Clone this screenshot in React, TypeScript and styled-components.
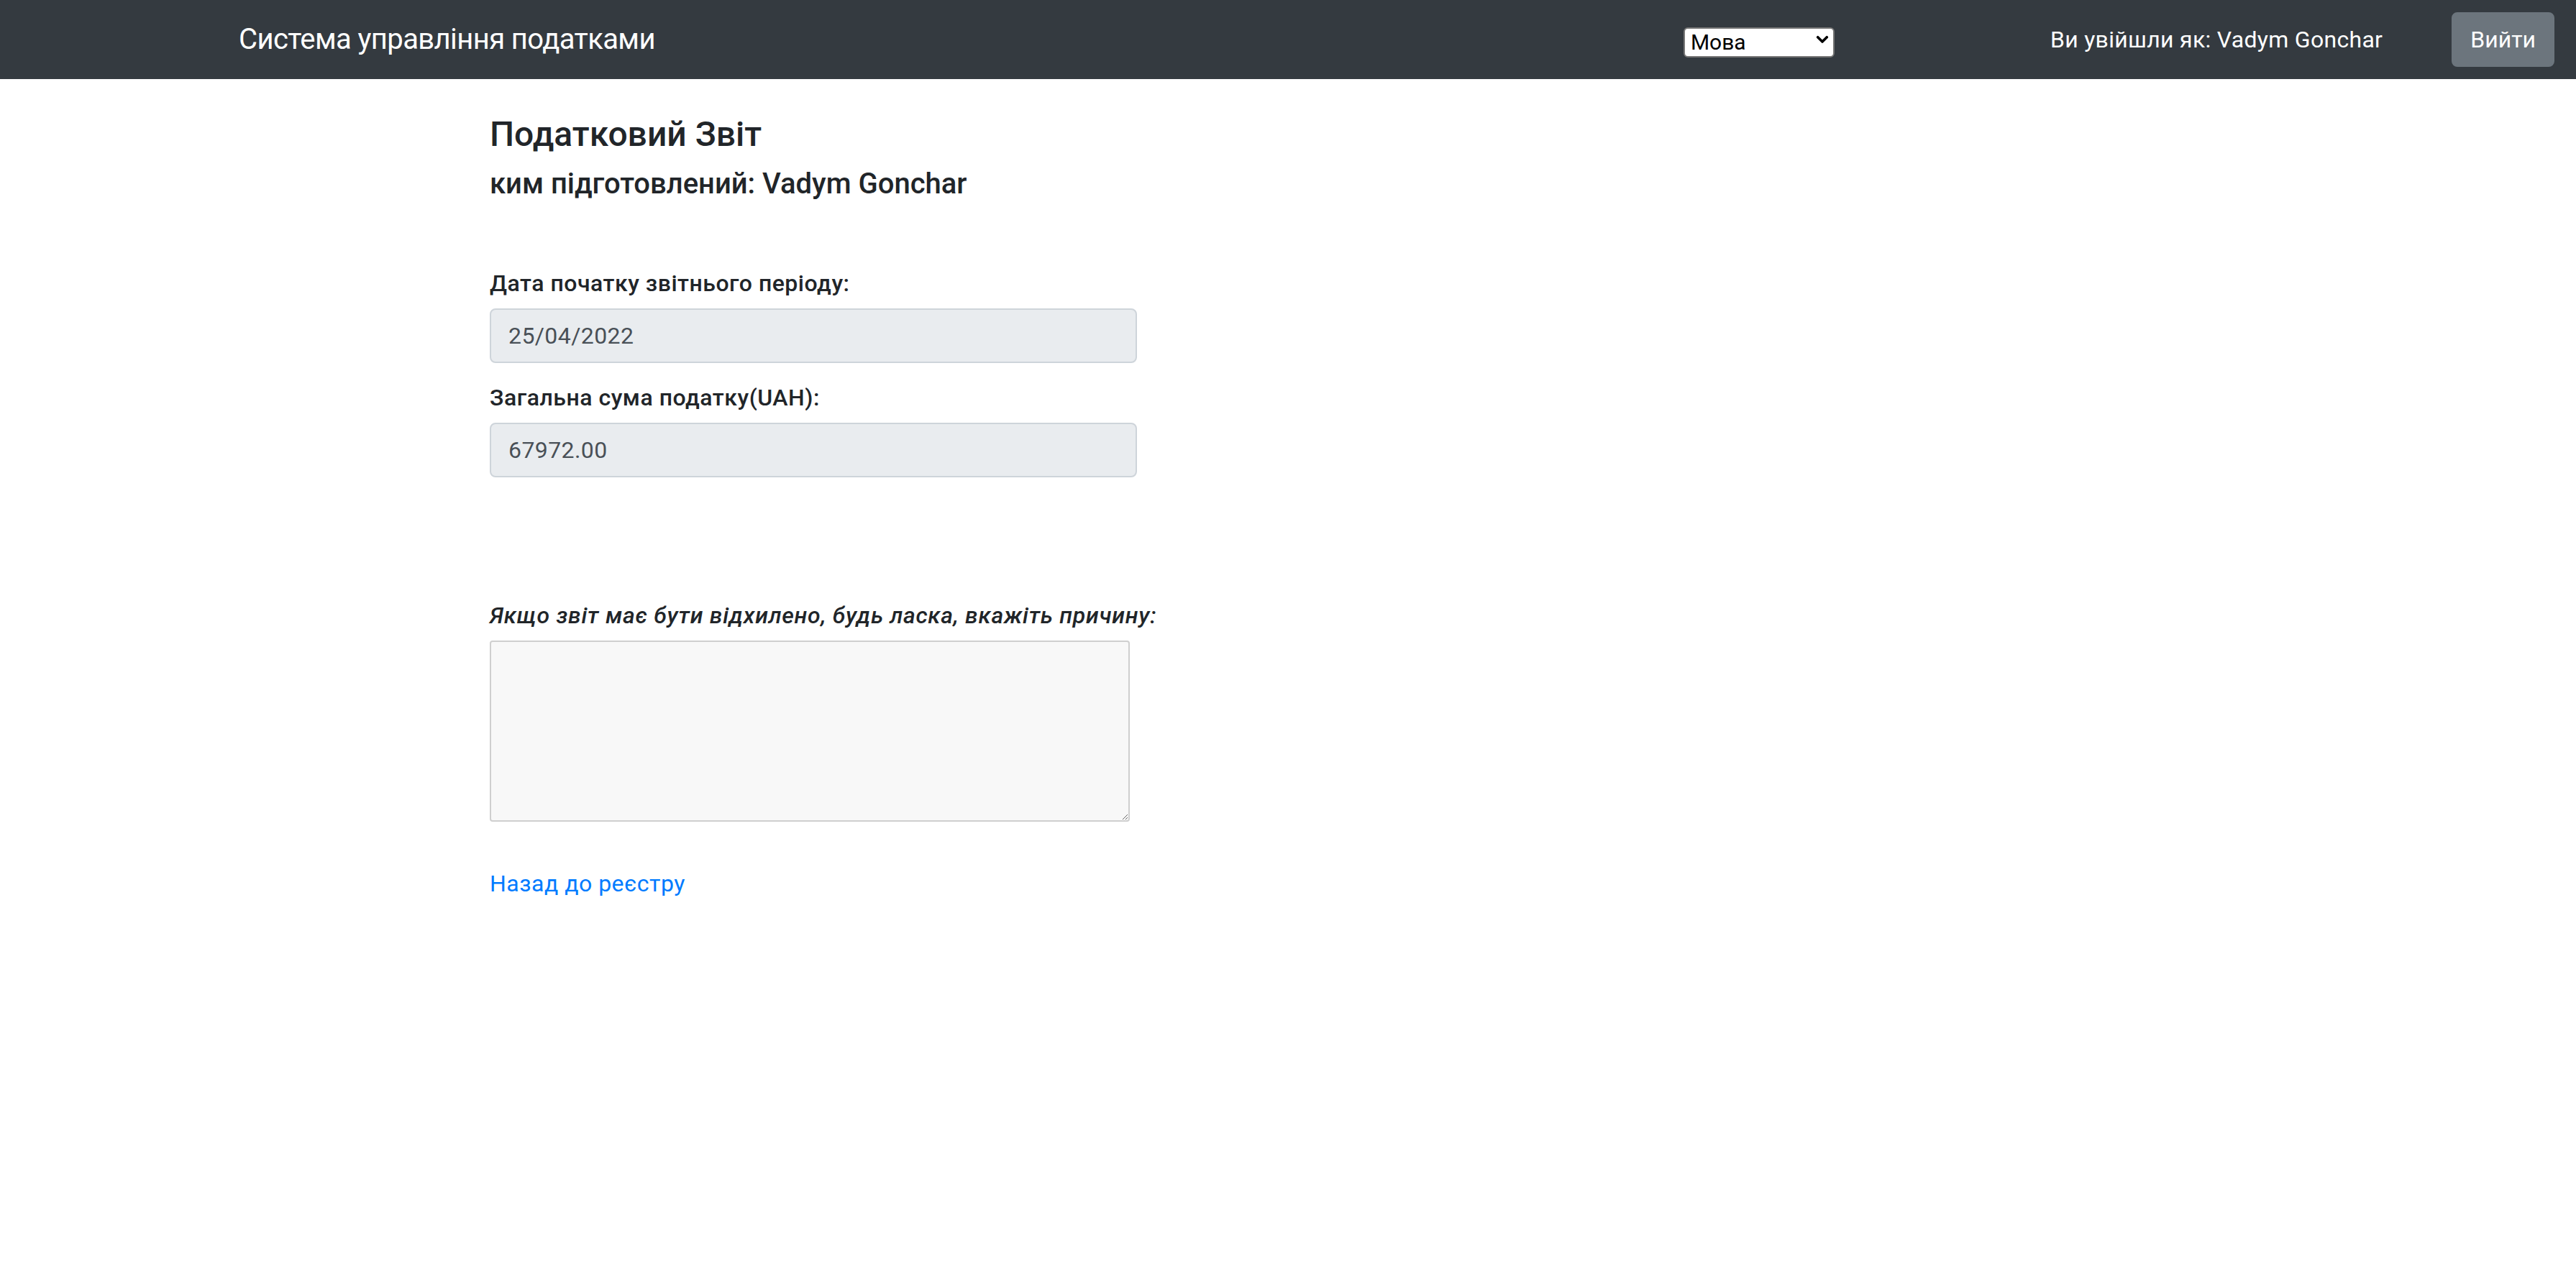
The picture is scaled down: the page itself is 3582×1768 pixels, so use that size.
import React from "react";
import styled, { createGlobalStyle } from "styled-components";

const FONT = `Roboto, "Noto Sans", "Liberation Sans", sans-serif`;

const GlobalStyle = createGlobalStyle`
  html {
    zoom: 2;
  }
  body {
    margin: 0;
    background: #ffffff;
    font-family: ${FONT};
    color: #212529;
    font-size: 16px;
    line-height: 1.5;
  }
  * {
    box-sizing: border-box;
  }
`;

const NavBar = styled.nav`
  display: flex;
  align-items: center;
  height: 55px;
  padding: 0 15px 0 166px;
  background: #343a40;
`;

const Brand = styled.a`
  color: #ffffff;
  font-size: 20px;
  line-height: 30px;
  letter-spacing: -0.3px;
  text-decoration: none;
  white-space: nowrap;
`;

const NavRight = styled.div`
  display: flex;
  align-items: center;
  margin-left: auto;
`;

const SelectWrap = styled.div`
  position: relative;
  width: 105px;
  height: 21px;
`;

const LangSelect = styled.select`
  appearance: none;
  width: 100%;
  height: 100%;
  margin: 0;
  padding: 0 18px 0 4px;
  border: 1px solid #767676;
  border-radius: 3px;
  background: #ffffff;
  color: #000000;
  font-family: ${FONT};
  font-size: 15px;
  line-height: 19px;
`;

const Chevron = styled.svg`
  position: absolute;
  right: 4px;
  top: 6px;
  width: 9px;
  height: 9px;
  pointer-events: none;
`;

const UserText = styled.span`
  margin-left: 150px;
  color: #ffffff;
  font-size: 16px;
  line-height: 24px;
  letter-spacing: 0.15px;
  white-space: nowrap;
`;

const LogoutButton = styled.button`
  margin-left: 48px;
  height: 38px;
  padding: 0 12px;
  border: 1px solid #6c757d;
  border-radius: 4px;
  background: #6c757d;
  color: #ffffff;
  font-family: ${FONT};
  font-size: 16px;
  line-height: 24px;
  cursor: pointer;
`;

const Container = styled.main`
  width: 1140px;
  margin: 0 auto;
  padding: 0 15px;
`;

const Title = styled.h4`
  margin: 24px 0 0;
  font-size: 24px;
  line-height: 28.8px;
  font-weight: 500;
  color: #212529;
`;

const Subtitle = styled.h5`
  margin: 8px 0 0;
  font-size: 20px;
  line-height: 24px;
  font-weight: 500;
  color: #212529;
`;

const Form = styled.form`
  display: flex;
  flex-direction: column;
  gap: 12px;
  margin-top: 45px;
`;

const Field = styled.div`
  display: flex;
  flex-direction: column;
`;

const Label = styled.label<{ $italic?: boolean }>`
  display: block;
  margin-bottom: 5.5px;
  font-size: 16px;
  line-height: 24px;
  font-weight: 500;
  font-style: ${(p) => (p.$italic ? "italic" : "normal")};
  letter-spacing: ${(p) => (p.$italic ? "0.38px" : "0.26px")};
  color: #212529;
`;

const ReadOnlyInput = styled.input`
  width: 450px;
  height: 38px;
  padding: 6px 12px;
  border: 1px solid #ced4da;
  border-radius: 4px;
  background: #e9ecef;
  color: #495057;
  font-family: ${FONT};
  font-size: 16px;
  line-height: 24px;
  letter-spacing: 0.2px;
  outline: none;
`;

const ReasonBlock = styled.div`
  display: flex;
  flex-direction: column;
  align-items: flex-start;
  margin-top: 84.2px;
`;

const ReasonArea = styled.textarea`
  display: block;
  width: 445px;
  height: 126px;
  padding: 2px;
  border: 1px solid #cfcfcf;
  border-radius: 2px;
  background: #f8f8f8;
  font-family: ${FONT};
  font-size: 16px;
  resize: both;
`;

const BackLink = styled.a`
  display: inline-block;
  margin-top: 31px;
  color: #007bff;
  font-size: 16px;
  line-height: 24px;
  letter-spacing: 0.25px;
  text-decoration: none;
`;

export default function App() {
  return (
    <>
      <GlobalStyle />
      <NavBar>
        <Brand href="#">Система управління податками</Brand>
        <NavRight>
          <SelectWrap>
            <LangSelect defaultValue="">
              <option value="">Мова</option>
              <option value="uk">Українська</option>
              <option value="en">English</option>
            </LangSelect>
            <Chevron viewBox="0 0 10 10">
              <path d="M1.5 3.2 L5 6.7 L8.5 3.2" fill="none" stroke="#000" strokeWidth="2" strokeLinecap="round" strokeLinejoin="round" />
            </Chevron>
          </SelectWrap>
          <UserText>Ви увійшли як: Vadym Gonchar</UserText>
          <LogoutButton type="button">Вийти</LogoutButton>
        </NavRight>
      </NavBar>
      <Container>
        <Title>Податковий Звіт</Title>
        <Subtitle>ким підготовлений: Vadym Gonchar</Subtitle>
        <Form>
          <Field>
            <Label>Дата початку звітнього періоду:</Label>
            <ReadOnlyInput readOnly value="25/04/2022" />
          </Field>
          <Field>
            <Label>Загальна сума податку(UAH):</Label>
            <ReadOnlyInput readOnly value="67972.00" />
          </Field>
        </Form>
        <ReasonBlock>
          <Label $italic>Якщо звіт має бути відхилено, будь ласка, вкажіть причину:</Label>
          <ReasonArea />
          <BackLink href="#">Назад до реєстру</BackLink>
        </ReasonBlock>
      </Container>
    </>
  );
}
